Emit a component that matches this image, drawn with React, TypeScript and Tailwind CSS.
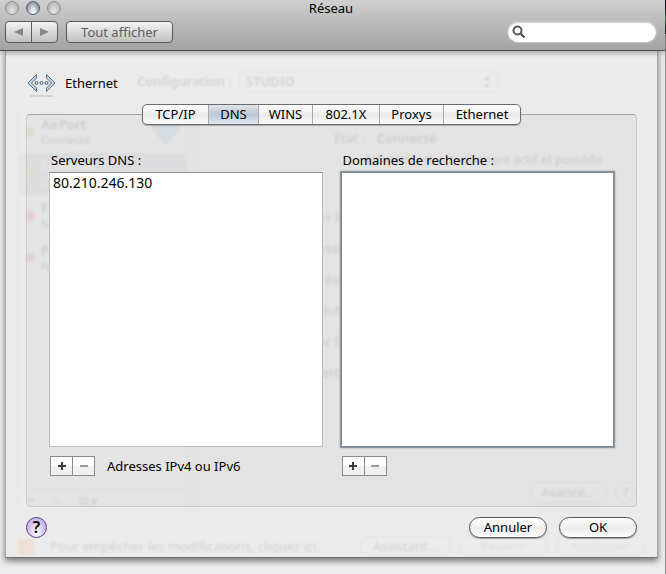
import { ReactNode } from "react";

const font = "font-['Lucida_Grande','Noto_Sans',sans-serif]";

const tabs = [
  { label: "TCP/IP", width: "w-[66px]" },
  { label: "DNS", width: "w-[50px]" },
  { label: "WINS", width: "w-[54px]" },
  { label: "802.1X", width: "w-[67px]" },
  { label: "Proxys", width: "w-16" },
  { label: "Ethernet", width: "w-[76px]" },
];

const services = [
  { name: "AirPort", status: "Connecté", dot: "bg-lime-500", selected: false },
  { name: "Ethernet", status: "Connecté", dot: "bg-lime-500", selected: true },
  { name: "FireWire", status: "Non connecté", dot: "bg-red-500", selected: false },
  { name: "Parallels", status: "Non connecté", dot: "bg-red-500", selected: false },
];

const settings = [
  "Configurer IPv4 :",
  "Adresse IP :",
  "Sous-réseau :",
  "Routeur :",
  "Serveur DNS :",
  "Rechercher :",
];

const GhostButton = ({ children, width }: { children: ReactNode; width: string }) => (
  <div className={`${width} h-[21px] rounded-full border border-black/50 text-center leading-[19px]`}>
    {children}
  </div>
);

// The network pane that shows faintly through the sheet
const NetworkPane = () => (
  <div
    aria-hidden="true"
    className="pointer-events-none absolute inset-0 flex flex-col overflow-hidden px-3 pt-5 text-[13px] opacity-10 blur-[1px] select-none"
  >
    <div className="flex h-[21px] items-center gap-1.5 pl-[119px]">
      <span className="w-[96px] font-semibold whitespace-nowrap">Configuration :</span>
      <div className="flex h-[21px] w-[259px] items-center justify-between rounded border border-black/40 px-1.5 font-semibold">
        STUDIO
        <svg width="8" height="12" viewBox="0 0 8 12">
          <path d="M4 0l3 4H1zM4 12l3-4H1z" />
        </svg>
      </div>
    </div>

    <div className="mt-[18px] flex flex-1 gap-2">
      <div className="flex w-[169px] flex-col border border-black/20 bg-white/40">
        {services.map((service) => (
          <div
            key={service.name}
            className={`flex h-[42px] items-center gap-1.5 pl-1.5 ${
              service.selected ? "bg-slate-500/50 text-white" : ""
            }`}
          >
            <span className={`size-2.5 rounded-full ${service.dot}`} />
            <div className="flex-1 leading-[15px]">
              <div className="font-semibold">{service.name}</div>
              <div className="text-[11px]">{service.status}</div>
            </div>
            {service.name === "AirPort" && (
              <svg width="32" height="26" viewBox="0 0 32 26" className="mr-1 fill-sky-600/60">
                <path d="M0 8Q16-6 32 8L16 26z" />
              </svg>
            )}
          </div>
        ))}
        <div className="mt-auto flex h-[21px] items-center gap-4 border-t border-black/30 pl-2 text-base text-black/60">
          <span>+</span>
          <span>−</span>
          <span>✲▾</span>
        </div>
      </div>

      <div className="flex flex-1 flex-col border border-black/20">
        <div className="mt-[18px] flex gap-3 pl-[138px]">
          <span>État :</span>
          <span className="font-semibold">Connecté</span>
        </div>
        <div className="mt-0.5 pr-[42px] text-right text-[12px]">Ethernet est actuellement actif et possède</div>
        <div className="mt-[38px] flex w-[172px] flex-col gap-[11px] text-right leading-5">
          {settings.map((setting) => (
            <span key={setting}>{setting}</span>
          ))}
        </div>
        <div className="mt-auto mr-2 mb-2 flex items-center justify-end gap-2">
          <GhostButton width="w-[77px]">Avancé...</GhostButton>
          <GhostButton width="w-[21px]">?</GhostButton>
        </div>
      </div>
    </div>

    <div className="mt-6 flex h-[21px] items-center gap-2">
      <span className="h-4 w-4 bg-orange-500/80" />
      <span className="flex-1 pl-2 whitespace-nowrap">Pour empêcher les modifications, cliquez ici.</span>
      <GhostButton width="w-[91px]">Assistant...</GhostButton>
      <div className="flex gap-2 text-black/50">
        <GhostButton width="w-[89px]">Revenir</GhostButton>
        <GhostButton width="w-[89px]">Appliquer</GhostButton>
      </div>
    </div>
  </div>
);

const WindowLight = ({ label, active }: { label: string; active?: boolean }) => (
  <button
    aria-label={label}
    className={`size-3.5 rounded-full border ${
      active
        ? "border-[#566170] bg-radial-[at_50%_80%] from-[#f4f8fc] from-10% to-[#5f6b7b]"
        : "border-[#8e8e8e] bg-radial-[at_50%_80%] from-[#e6e6e6] to-[#a6a6a6]"
    }`}
  />
);

const TitleBar = () => (
  <header className="relative z-10 h-[51px] border-b border-[#4b4b4b] bg-linear-to-b from-[#cfcfcf] to-[#a3a3a3] shadow-[0_2px_5px_rgba(0,0,0,0.3)]">
    {/* desktop behind the window's edge */}
    <div className="absolute top-0 -right-px h-[34px] w-px bg-linear-to-b from-[#15151f] from-25% via-[#3f6b50] to-[#15151f]" />
    <div className="grid h-[21px] grid-cols-3 items-start pt-px pr-2 pl-[5px]">
      <div className="flex gap-[7px]">
        <WindowLight label="Fermer" />
        <WindowLight label="Réduire" active />
        <WindowLight label="Agrandir" />
      </div>
      <h1 className="text-center text-[13px] leading-[14px]">Réseau</h1>
    </div>
    <div className="flex items-center pr-2 pl-[5px]">
      <div className="flex h-[22px] w-[53px] overflow-hidden rounded border border-[#595959] bg-linear-to-b from-[#f4f4f4] to-[#c0c0c0]">
        <button aria-label="Précédent" className="flex flex-1 items-center justify-center border-r border-[#595959]">
          <svg width="9" height="8" viewBox="0 0 9 8" className="fill-[#868686]">
            <path d="M0 4L9 0V8z" />
          </svg>
        </button>
        <button aria-label="Suivant" className="flex flex-1 items-center justify-center">
          <svg width="9" height="8" viewBox="0 0 9 8" className="fill-[#868686]">
            <path d="M9 4L0 0V8z" />
          </svg>
        </button>
      </div>
      <button className="ml-2 h-[22px] w-[107px] rounded border border-[#595959] bg-linear-to-b from-[#f4f4f4] to-[#c0c0c0] text-[13px] leading-5 text-[#5e5e5e]">
        Tout afficher
      </button>
      <label className="ml-auto flex h-[22px] w-[150px] items-center rounded-full border border-[#c4c4c4] bg-white pl-1 shadow-[inset_0_1px_1px_rgba(0,0,0,0.2)]">
        <svg width="14" height="14" viewBox="0 0 14 14" fill="none" stroke="#555" className="shrink-0">
          <circle cx="5.5" cy="5.5" r="4" strokeWidth="2" />
          <path d="M8.5 8.5L12.5 12.5" strokeWidth="2.4" />
        </svg>
        <input aria-label="Rechercher" className="w-full min-w-0 bg-transparent px-1 text-[13px] outline-none" />
      </label>
    </div>
  </header>
);

const EthernetIcon = () => (
  <svg width="30" height="26" viewBox="0 0 30 26" fill="none">
    <path
      d="M9.5 1.5v3.5L4.5 10l5 5v3.500L1 10zM19.500 1.500v3.500l5 5l-5 5v3.500L28 10z"
      fill="#c3d2e2"
      stroke="#5d6f86"
    />
    <g fill="#d5e0ec" stroke="#4c607a">
      <circle cx="9.5" cy="10" r="1.5" />
      <circle cx="14.5" cy="10" r="1.5" />
      <circle cx="19.5" cy="10" r="1.5" />
    </g>
    <path d="M3 23h8M12 23h5M18 23h8" stroke="#d2d2d2" strokeWidth="2" />
  </svg>
);

const AddRemove = ({ name }: { name: string }) => (
  <div className="flex h-5 w-[45px] border border-[#8b8b8b] bg-linear-to-b from-white from-50% to-[#f0f0f0] to-50%">
    <button
      aria-label={`Ajouter : ${name}`}
      className="flex flex-1 items-center justify-center border-r border-[#8b8b8b]"
    >
      <svg width="8" height="8" viewBox="0 0 8 8" className="fill-[#3c3c3c]">
        <path d="M3 0h2v3h3v2H5v3H3V5H0V3h3z" />
      </svg>
    </button>
    <button aria-label={`Supprimer : ${name}`} className="flex flex-1 items-center justify-center">
      <svg width="8" height="8" viewBox="0 0 8 8" className="fill-[#9a9a9a]">
        <path d="M0 3h8v2H0z" />
      </svg>
    </button>
  </div>
);

const PillButton = ({ children }: { children: ReactNode }) => (
  <button className="h-[21px] w-[78px] rounded-full border border-[#555] bg-linear-to-b from-white via-[#ececec] via-55% to-white text-[13px] leading-[19px] shadow-[0_1px_1px_rgba(0,0,0,0.3)]">
    {children}
  </button>
);

const DnsPanel = () => (
  <section className="grid flex-1 grid-cols-2 gap-[18px] rounded border border-[#c9c9c9] border-t-[#a3a3a3] bg-black/3 px-[22px] pt-9 pb-[30px]">
    <div className="flex flex-col">
      <label htmlFor="servers" className="pl-0.5 text-[13px] leading-[18px]">
        Serveurs DNS :
      </label>
      <textarea
        id="servers"
        defaultValue="80.210.246.130"
        className="mt-[3px] block w-full flex-1 resize-none border border-[#bdbdbd] border-t-[#8e8e8e] bg-white px-[3px] py-px text-[14px] leading-[18px] outline-none"
      />
      <div className="mt-[9px] flex items-center gap-3 pl-px">
        <AddRemove name="serveurs DNS" />
        <span className="text-[13px] leading-[18px]">Adresses IPv4 ou IPv6</span>
      </div>
    </div>
    <div className="flex flex-col">
      <label htmlFor="domains" className="pl-0.5 text-[13px] leading-[18px]">
        Domaines de recherche :
      </label>
      <textarea
        id="domains"
        className="mt-[3px] block w-full flex-1 resize-none border border-[#7d8893] bg-white px-[3px] py-px text-[14px] leading-[18px] shadow-[0_0_0_1px_#8995a1,0_0_2px_1px_#a5aeb8] outline-none"
      />
      <div className="mt-[9px] flex pl-px">
        <AddRemove name="domaines de recherche" />
      </div>
    </div>
  </section>
);

const App = () => {
  return (
    <div className={`${font} flex min-h-screen flex-col border-r border-[#8f8f8f] bg-[#ececec] text-black`}>
      <TitleBar />
      <main className="flex flex-1 flex-col pr-[7px] pb-4 pl-[5px]">
        <div className="relative flex flex-1 flex-col border border-t-0 border-[#a8a8a8] border-b-[#707070] bg-[#ebebeb] shadow-[0_3px_6px_rgba(0,0,0,0.5)]">
          <NetworkPane />
          <div className="relative flex flex-1 flex-col px-5 pt-5 pb-[19px]">
            <div className="flex h-[33px] items-start gap-2 pl-px">
              <div className="pt-0.5">
                <EthernetIcon />
              </div>
              <h2 className="text-[13px] leading-6">Ethernet</h2>
            </div>
            <div className="relative z-10 -mb-[11px] flex justify-center">
              <div
                role="tablist"
                className="flex h-[21px] overflow-hidden rounded-[5px] border border-[#6b6b6b] bg-linear-to-b from-white via-[#ebebeb] via-55% to-[#fafafa] shadow-[0_1px_1px_rgba(0,0,0,0.25)]"
              >
                {tabs.map((tab) => (
                  <button
                    key={tab.label}
                    role="tab"
                    aria-selected={tab.label === "DNS"}
                    className={`${tab.width} border-r border-[#a9a9a9] text-[13px] leading-[19px] last:border-r-0 ${
                      tab.label === "DNS" ? "bg-linear-to-b from-[#e0e5ea] via-[#bdc8d3] via-50% to-[#dfe8f0]" : ""
                    }`}
                  >
                    {tab.label}
                  </button>
                ))}
              </div>
            </div>
            <DnsPanel />
            <div className="mt-[10px] flex items-center">
              <button
                aria-label="Aide"
                className="size-[21px] rounded-full border border-[#5c3d8c] bg-radial-[at_50%_75%] from-white to-[#b495e3] text-[16px] leading-[19px] font-semibold"
              >
                ?
              </button>
              <div className="ml-auto flex gap-3">
                <PillButton>Annuler</PillButton>
                <PillButton>OK</PillButton>
              </div>
            </div>
          </div>
        </div>
      </main>
    </div>
  );
};

export default App;
